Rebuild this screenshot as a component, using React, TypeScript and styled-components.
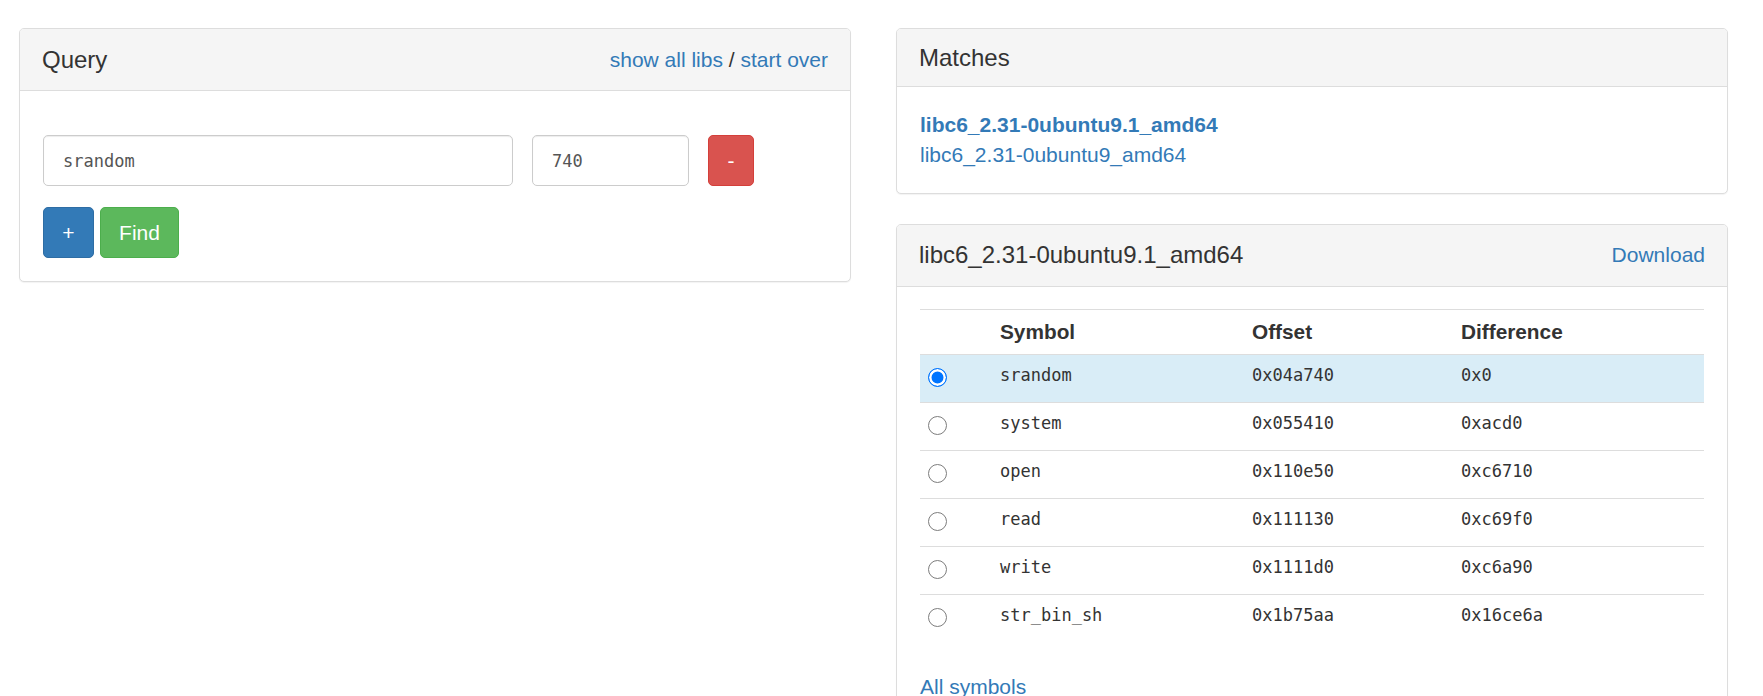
import React from "react";
import styled, { createGlobalStyle } from "styled-components";

const GlobalStyle = createGlobalStyle`
  * { box-sizing: border-box; }
  html, body { margin: 0; padding: 0; background: #fff; overflow: hidden; }
  body {
    font-family: "Liberation Sans", Arial, Helvetica, sans-serif;
    font-size: 20.8px;
    line-height: 1.428;
    color: #333;
  }
`;

const Page = styled.div`
  display: grid;
  grid-template-columns: 832px 832px;
  column-gap: 45px;
  align-items: start;
  padding: 28px 0 0 19px;
`;

const Column = styled.div`
  display: flex;
  flex-direction: column;
  gap: 30px;
`;

const Panel = styled.section`
  background: #fff;
  border: 1px solid #ddd;
  border-radius: 5px;
  box-shadow: 0 1px 1px rgba(0, 0, 0, 0.05);
`;

const PanelHeading = styled.div`
  display: flex;
  align-items: center;
  justify-content: space-between;
  padding: 15.6px 22px;
  background: #f5f5f5;
  border-bottom: 1px solid #ddd;
  border-radius: 4px 4px 0 0;
`;

const PanelTitle = styled.h3`
  margin: 0;
  font-size: 24px;
  font-weight: 400;
  line-height: 1.08;
  color: #333;
`;

const HeaderLinks = styled.span`
  font-size: 21px;
  line-height: 30px;
  color: #333;
`;

const Link = styled.a`
  color: #337ab7;
  text-decoration: none;
  font-size: 21px;
`;

const PanelBody = styled.div`
  padding: 23px;
`;

const QueryForm = styled.form`
  display: flex;
  flex-direction: column;
  gap: 21px;
  margin: 21px 0 0;
`;

const InputRow = styled.div`
  display: flex;
  gap: 19px;
`;

const ButtonRow = styled.div`
  display: flex;
  gap: 6px;
`;

const TextInput = styled.input<{ $w: number }>`
  width: ${(p) => p.$w}px;
  height: 51px;
  padding: 0 19px;
  border: 1px solid #ccc;
  border-radius: 5px;
  box-shadow: inset 0 1px 1px rgba(0, 0, 0, 0.075);
  background: #fff;
  font-family: "DejaVu Sans Mono", "Liberation Mono", monospace;
  font-size: 17px;
  color: #555;
  outline: none;
`;

const variants = {
  primary: { bg: "#337ab7", border: "#2e6da4" },
  success: { bg: "#5cb85c", border: "#4cae4c" },
  danger: { bg: "#d9534f", border: "#d43f3a" },
};

const Button = styled.button<{ $variant: keyof typeof variants; $w: number }>`
  width: ${(p) => p.$w}px;
  height: 51px;
  padding: 0;
  border-radius: 5px;
  border: 1px solid ${(p) => variants[p.$variant].border};
  background: ${(p) => variants[p.$variant].bg};
  color: #fff;
  font-family: "Liberation Sans", Arial, Helvetica, sans-serif;
  font-size: 21px;
  line-height: 1;
  cursor: pointer;
`;

const MatchLink = styled.a<{ $active?: boolean }>`
  display: block;
  color: #337ab7;
  text-decoration: none;
  font-size: 21px;
  font-weight: ${(p) => (p.$active ? 700 : 400)};
  line-height: 29.7px;
`;

const SymbolTable = styled.table`
  width: 100%;
  table-layout: fixed;
  border-collapse: separate;
  border-spacing: 0;
  margin: -1px 0 30px;
`;

const HeadCell = styled.th`
  height: 45px;
  padding: 0 10px;
  text-align: left;
  font-weight: 700;
  vertical-align: middle;
  border-top: 1px solid #ddd;
`;

const BodyRow = styled.tr<{ $selected?: boolean }>`
  background: ${(p) => (p.$selected ? "#d9edf7" : "transparent")};
`;

const BodyCell = styled.td`
  height: 48px;
  padding: 0 10px 6px;
  border-top: 1px solid #ddd;
  vertical-align: middle;
  font-family: "DejaVu Sans Mono", "Liberation Mono", monospace;
  font-size: 17px;
  color: #333;
`;

const RadioCell = styled(BodyCell)`
  padding: 0 0 1px 8px;
`;

const Radio = styled.input.attrs({ type: "radio" })`
  appearance: none;
  -webkit-appearance: none;
  display: block;
  margin: 0;
  width: 19px;
  height: 19px;
  border-radius: 50%;
  border: 1px solid #7d7d7d;
  background: #fff;

  &:checked {
    border: 1.5px solid #0075ff;
    background: #0075ff;
    box-shadow: inset 0 0 0 2.5px #fff;
  }
`;

const rows: { sym: string; off: string; diff: string }[] = [
  { sym: "srandom", off: "0x04a740", diff: "0x0" },
  { sym: "system", off: "0x055410", diff: "0xacd0" },
  { sym: "open", off: "0x110e50", diff: "0xc6710" },
  { sym: "read", off: "0x111130", diff: "0xc69f0" },
  { sym: "write", off: "0x1111d0", diff: "0xc6a90" },
  { sym: "str_bin_sh", off: "0x1b75aa", diff: "0x16ce6a" },
];

export default function App() {
  const [selected, setSelected] = React.useState(0);
  return (
    <>
      <GlobalStyle />
      <Page>
        <Column>
          <Panel>
            <PanelHeading>
              <PanelTitle>Query</PanelTitle>
              <HeaderLinks>
                <Link href="#">show all libs</Link> / <Link href="#">start over</Link>
              </HeaderLinks>
            </PanelHeading>
            <PanelBody>
              <QueryForm onSubmit={(e) => e.preventDefault()}>
                <InputRow>
                  <TextInput $w={470} defaultValue="srandom" />
                  <TextInput $w={157} defaultValue="740" />
                  <Button type="button" $variant="danger" $w={46}>
                    -
                  </Button>
                </InputRow>
                <ButtonRow>
                  <Button type="button" $variant="primary" $w={51}>
                    +
                  </Button>
                  <Button type="submit" $variant="success" $w={79}>
                    Find
                  </Button>
                </ButtonRow>
              </QueryForm>
            </PanelBody>
          </Panel>
        </Column>
        <Column>
          <Panel>
            <PanelHeading>
              <PanelTitle>Matches</PanelTitle>
            </PanelHeading>
            <PanelBody>
              <MatchLink href="#" $active>
                libc6_2.31-0ubuntu9.1_amd64
              </MatchLink>
              <MatchLink href="#">libc6_2.31-0ubuntu9_amd64</MatchLink>
            </PanelBody>
          </Panel>
          <Panel>
            <PanelHeading>
              <PanelTitle>libc6_2.31-0ubuntu9.1_amd64</PanelTitle>
              <HeaderLinks>
                <Link href="#">Download</Link>
              </HeaderLinks>
            </PanelHeading>
            <PanelBody>
              <SymbolTable>
                <colgroup>
                  <col style={{ width: 70 }} />
                  <col style={{ width: 252 }} />
                  <col style={{ width: 209 }} />
                  <col />
                </colgroup>
                <thead>
                  <tr>
                    <HeadCell />
                    <HeadCell>Symbol</HeadCell>
                    <HeadCell>Offset</HeadCell>
                    <HeadCell>Difference</HeadCell>
                  </tr>
                </thead>
                <tbody>
                  {rows.map((r, i) => (
                    <BodyRow key={r.sym} $selected={i === selected}>
                      <RadioCell>
                        <Radio
                          name="sym"
                          checked={i === selected}
                          onChange={() => setSelected(i)}
                        />
                      </RadioCell>
                      <BodyCell>{r.sym}</BodyCell>
                      <BodyCell>{r.off}</BodyCell>
                      <BodyCell>{r.diff}</BodyCell>
                    </BodyRow>
                  ))}
                </tbody>
              </SymbolTable>
              <Link href="#">All symbols</Link>
            </PanelBody>
          </Panel>
        </Column>
      </Page>
    </>
  );
}
